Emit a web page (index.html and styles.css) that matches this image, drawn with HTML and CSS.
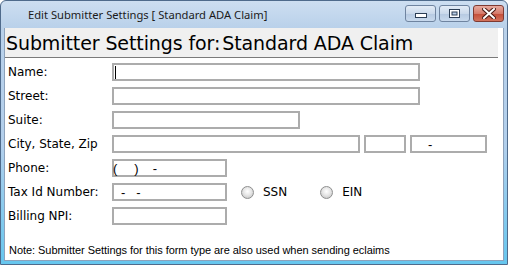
FILE: index.html
```html
<!DOCTYPE html>
<html lang="en">
<head>
    <meta charset="UTF-8">
    <title>Edit Submitter Settings</title>
    <link rel="stylesheet" href="styles.css">
</head>
<body>
    <div class="window">
        <div class="titlebar">
            <span class="title">Edit Submitter Settings [ Standard ADA Claim]</span>
            <div class="caption-buttons">
                <span class="cbtn">
                    <svg width="12" height="6" viewBox="0 0 12 6"><rect x="0.5" y="0.5" width="11" height="4" fill="#fff" stroke="#2c3e55"/></svg>
                </span>
                <span class="cbtn">
                    <svg width="11" height="9" viewBox="0 0 11 9"><rect x="0.5" y="0.5" width="10" height="8" fill="#fff" stroke="#2c3e55"/><rect x="3" y="3" width="5" height="3" fill="#b9cde6" stroke="#2c3e55" stroke-width="1"/></svg>
                </span>
                <span class="cbtn close">
                    <svg width="14" height="11" viewBox="0 0 14 11"><path d="M2 1 L12 10 M12 1 L2 10" stroke="#4a1a14" stroke-width="4" stroke-linecap="square"/><path d="M2 1 L12 10 M12 1 L2 10" stroke="#fff" stroke-width="2" stroke-linecap="square"/></svg>
                </span>
            </div>
        </div>

        <div class="client">
            <div class="header">
                <span>Submitter Settings for:</span>
                <span class="form-name">Standard ADA Claim</span>
            </div>

            <div class="form">
                <div class="row">
                    <span class="label">Name:</span>
                    <div class="field w-long"><span class="caret"></span></div>
                </div>
                <div class="row">
                    <span class="label">Street:</span>
                    <div class="field w-long"></div>
                </div>
                <div class="row">
                    <span class="label">Suite:</span>
                    <div class="field w-suite"></div>
                </div>
                <div class="row">
                    <span class="label">City, State, Zip</span>
                    <div class="field w-city"></div>
                    <div class="field w-state"></div>
                    <div class="field w-zip"><span class="zip-dash">-</span></div>
                </div>
                <div class="row">
                    <span class="label">Phone:</span>
                    <div class="field w-short">
                        <span class="phone-open">(</span>
                        <span class="phone-close">)</span>
                        <span class="phone-dash">-</span>
                    </div>
                </div>
                <div class="row">
                    <span class="label">Tax Id Number:</span>
                    <div class="field w-short">
                        <span class="tax-dash1">-</span>
                        <span class="tax-dash2">-</span>
                    </div>
                    <span class="radio first"></span><span class="radio-label">SSN</span>
                    <span class="radio"></span><span class="radio-label">EIN</span>
                </div>
                <div class="row">
                    <span class="label">Billing NPI:</span>
                    <div class="field w-short"></div>
                </div>
            </div>

            <p class="note">Note: Submitter Settings for this form type are also used when sending eclaims</p>
        </div>
    </div>
</body>
</html>
```

FILE: styles.css
```css
body {
    margin: 0;
    font-family: "Liberation Sans", Arial, sans-serif;
    color: #000;
}
.window {
    width: 508px;
    height: 265px;
    box-sizing: border-box;
    display: flex;
    flex-direction: column;
    border: 1px solid #4f6b8c;
    border-radius: 6px 6px 0 0;
    padding: 0 3px 3px;
    background: linear-gradient(#cddef1, #b9d1ea 27px, #b2cfec 55%, #66c6ee);
}
.titlebar {
    height: 27px;
    display: flex;
    align-items: flex-start;
}
.title {
    padding-left: 24px;
    margin-top: 6px;
    font-family: "Noto Sans", sans-serif;
    font-size: 11.2px;
    color: #1b1b1b;
}
.caption-buttons {
    margin-left: auto;
    margin-top: 4px;
    display: flex;
    gap: 3px;
}
.cbtn {
    width: 29px;
    height: 15px;
    border: 1px solid #6f84a0;
    border-radius: 3px;
    display: flex;
    align-items: center;
    justify-content: center;
    background: linear-gradient(#e3ecf6, #cad9eb 50%, #b5c9e1 51%, #c8d9ed);
}
.cbtn:first-child svg {
    margin-top: 5px;
}
.cbtn.close {
    border-color: #7e3a32;
    background: linear-gradient(#e6a99e, #d67b6b 50%, #c44c38 51%, #d2735d);
}
.client {
    flex: 1;
    background: #fff;
    border: 1px solid #8da2bb;
    border-top: none;
    display: flex;
    flex-direction: column;
}
.header {
    height: 29px;
    background: #f0f0f0;
    border-bottom: 1px solid #7a7a7a;
    margin-right: 5px;
    padding-left: 1px;
    display: flex;
    align-items: center;
    gap: 2px;
    font-family: "DejaVu Sans", sans-serif;
    font-size: 19px;
    letter-spacing: -0.1px;
}
.form {
    padding: 5px 0 0 3px;
    display: flex;
    flex-direction: column;
    gap: 6px;
}
.row {
    height: 18px;
    display: flex;
    align-items: center;
}
.label {
    width: 104px;
    font-family: "DejaVu Sans", sans-serif;
    font-size: 12px;
}
.field {
    height: 18px;
    box-sizing: border-box;
    border: 2px solid #acacac;
    background: #fff;
    display: flex;
    align-items: center;
    font-size: 13px;
    margin-right: 4px;
}
.w-long { width: 308px; }
.w-suite { width: 188px; }
.w-city { width: 248px; }
.w-state { width: 42px; }
.w-zip { width: 77px; }
.w-short { width: 115px; }
.caret {
    width: 1px;
    height: 13px;
    margin-left: 1px;
    background: #000;
}
/* input mask characters */
.zip-dash { margin-left: 16px; }
.phone-open { margin-left: -1px; }
.phone-close { margin-left: 17px; }
.phone-dash { margin-left: 14px; }
.tax-dash1 { margin-left: 7px; }
.tax-dash2 { margin-left: 11px; }
.radio {
    width: 11px;
    height: 11px;
    border: 1px solid #8e8f8f;
    border-radius: 50%;
    background: radial-gradient(circle at 50% 40%, #ffffff, #e6e6e6 45%, #c4c4c4 90%);
    margin-left: 33px;
}
.radio.first {
    margin-left: 10px;
}
.radio-label {
    margin-left: 9px;
    font-family: "DejaVu Sans", sans-serif;
    font-size: 12px;
}
.note {
    margin: 19px 0 0 4px;
    font-size: 11px;
    letter-spacing: -0.05px;
}
```
